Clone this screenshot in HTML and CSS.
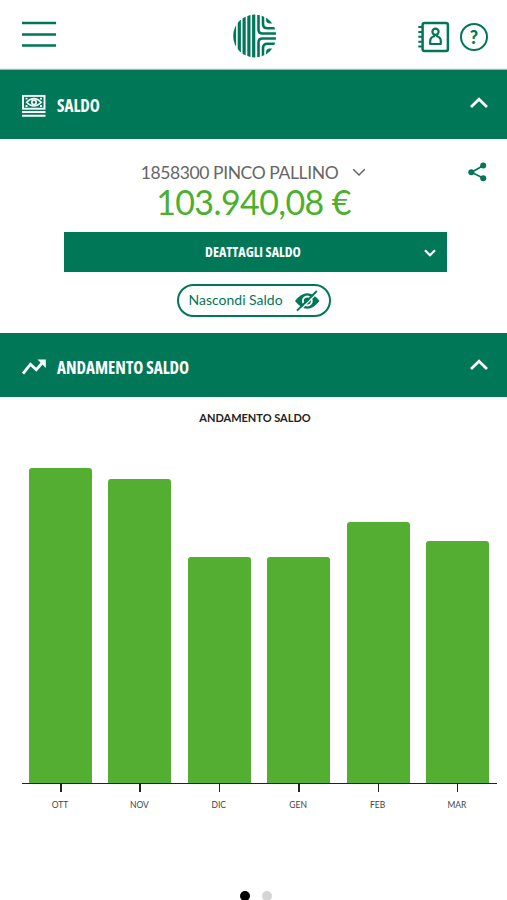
FILE: index.html
```html
<!DOCTYPE html>
<html lang="it">
<head>
<meta charset="utf-8">
<meta name="viewport" content="width=device-width, initial-scale=1">
<title>Saldo</title>
<link rel="stylesheet" href="styles.css">
</head>
<body>
<header class="topbar">
  <svg class="menu" width="34" height="28" viewBox="0 0 34 28"><path d="M0 2h34M0 13.500h34M0 24.500h34" stroke="#007858" stroke-width="2.500"/></svg>
  <svg class="logo" width="44" height="44" viewBox="0 0 44 44">
    <defs><clipPath id="disc"><circle cx="21.700" cy="22" r="21.500"/></clipPath></defs>
    <g clip-path="url(#disc)" fill="none" stroke="#007858" stroke-width="3.200">
      <path d="M1.500 0v44M6.300 0v44M11.100 0v44M15.900 0v44M20.700 0v44"/>
      <path stroke-width="2.600" d="M25.500 0v15.500q0 4 4 4H44M30 0v10q0 4.300 4.500 4.300H44M25.500 44V28.500q0-4 4-4H44M30 44V34q0-4.300 4.500-4.300H44"/>
      <path fill="#007858" stroke="none" d="M33 2v3.500q0 4 4 4h5L38 2zM33 42v-3.500q0-4 4-4h5L38 42z"/>
    </g>
  </svg>
  <div class="tools">
    <svg width="32" height="32" viewBox="0 0 32 32" fill="none" stroke="#007858">
      <rect x="4.600" y="1.900" width="25.300" height="28.200" rx="2" stroke-width="2.500"/>
      <path d="M.3 6h4.500M.3 11h4.500M.3 15.800h4.500M.3 20.700h4.500M.3 25.500h4.500" stroke-width="2"/>
      <circle cx="17.500" cy="10.800" r="3.100" stroke-width="2.200"/>
      <path d="M16 13.700v1.500c-2.500.8-3.800 2.500-3.800 4.800v3h10.600v-3c0-2.300-1.300-4-3.800-4.800v-1.500" stroke-width="2.200" stroke-linejoin="round"/>
    </svg>
    <span class="help">?</span>
  </div>
</header>
<section>
  <h2 class="band band-first">
    <svg width="24" height="24" viewBox="0 0 24 24" fill="none" stroke="#fff">
      <rect x="1" y="1.900" width="21.500" height="12.800" stroke-width="1.900"/>
      <path d="M4.500 8.300Q12 .8 19.300 8.300Q12 15.800 4.500 8.300z" stroke-width="1.500"/>
      <circle cx="12" cy="8.300" r="2.200" stroke-width="1.600"/>
      <path d="M3.500 4.700h2M18 4.700h2M3.500 12h2M18 12h2" stroke-width="1.800"/>
      <path d="M0 18.100h23.500M0 21.700h23.500" stroke-width="2"/>
    </svg>
    <span class="condensed">SALDO</span>
    <svg class="chevron" width="20" height="12" viewBox="0 0 20 12"><path d="M2 10l8-7.700L18 10" fill="none" stroke="#fff" stroke-width="2.800"/></svg>
  </h2>
  <div class="balance">
    <div class="account"><span>1858300 PINCO PALLINO</span>
      <svg width="14" height="9" viewBox="0 0 14 9"><path d="M1.200 1.200L7 7l5.800-5.800" fill="none" stroke="#666" stroke-width="1.500"/></svg>
    </div>
    <svg class="share" width="19" height="20" viewBox="0 0 19 20" fill="#007858"><path d="M15.500 3.500L3.500 10.300l12 6" fill="none" stroke="#007858" stroke-width="1.700"/><circle cx="15.200" cy="3.500" r="3"/><circle cx="3.300" cy="10.300" r="3"/><circle cx="15.200" cy="16.300" r="3"/></svg>
    <div class="amount">103.940,08 €</div>
    <button class="details"><span class="condensed">DEATTAGLI SALDO</span>
      <svg class="details-arrow" width="12" height="9" viewBox="0 0 12 9"><path d="M1 1.300l5 5 5-5" fill="none" stroke="#fff" stroke-width="2.200"/></svg>
    </button>
    <button class="hide"><span>Nascondi Saldo</span>
      <svg width="25" height="22" viewBox="0 0 25 22"><path d="M0 11Q6 3.300 12.300 3.300T24.500 11Q18.500 18.700 12.300 18.700T0 11z" fill="#007858"/><circle cx="12.300" cy="11" r="4.500" fill="none" stroke="#fff" stroke-width="1.900"/><path d="M3.500 21.700L23.300 1.800" stroke="#fff" stroke-width="1.500"/><path d="M2 20.700L21.800 1" stroke="#007858" stroke-width="1.900"/></svg>
    </button>
  </div>
</section>
<section>
  <h2 class="band">
    <svg width="24" height="24" viewBox="0 0 24 24"><path d="M1 18.500l7.500-9.300 5.800 5.500L20 8.200" fill="none" stroke="#fff" stroke-width="2.800"/><path d="M15.500 4.500h8.300V13z" fill="#fff"/></svg>
    <span class="condensed">ANDAMENTO SALDO</span>
    <svg class="chevron" width="20" height="12" viewBox="0 0 20 12"><path d="M2 10l8-7.700L18 10" fill="none" stroke="#fff" stroke-width="2.800"/></svg>
  </h2>
  <div class="chart">
    <h3>ANDAMENTO SALDO</h3>
    <div class="bars">
      <div class="bar" style="height:315px"></div>
      <div class="bar" style="height:304px"></div>
      <div class="bar" style="height:226.500px"></div>
      <div class="bar" style="height:226.500px"></div>
      <div class="bar" style="height:261.500px"></div>
      <div class="bar" style="height:242px"></div>
    </div>
    <div class="labels"><span>OTT</span><span>NOV</span><span>DIC</span><span>GEN</span><span>FEB</span><span>MAR</span></div>
    <div class="dots"><i class="dot active"></i><i class="dot"></i></div>
  </div>
</section>
</body>
</html>
```

FILE: styles.css
```css
* { box-sizing: border-box; }
html, body { height: 900px; overflow: hidden; }
body { margin: 0; background: #fff; font-family: Lato, sans-serif; }
svg { display: block; flex: none; }
h2, h3 { margin: 0; }
button { border: 0; padding: 0; font: inherit; }

.topbar { height: 70px; padding: 0 19px 0 22px; display: grid; grid-template-columns: 211px 1fr auto; }
.menu { margin-top: 21px; }
.logo { margin-top: 14px; }
.tools { display: flex; gap: 10px; margin-top: 21px; }
.help { width: 28px; height: 28px; margin-top: 2px; border: 2px solid #007858; border-radius: 50%; color: #007858; font-size: 18px; font-weight: 900; line-height: 24px; text-align: center; }

.condensed { font-family: "Open Sans", sans-serif; font-stretch: 75%; font-weight: 700; white-space: nowrap; }
.band { display: flex; align-items: center; height: 64px; padding: 4px 18px 0 22px; background: #007858; color: #fff; font-size: 17px; }
.band-first { height: 69px; padding-top: 2px; box-shadow: 0 -1px 1px #9bb8ae; }
.band .condensed { margin-left: 11px; }
.chevron { margin: 0 0 5px auto; }

.balance { position: relative; height: 194px; padding-top: 22px; display: flex; flex-direction: column; align-items: center; }
.account { display: flex; align-items: center; gap: 14px; height: 22px; color: #666; font-size: 17.500px; letter-spacing: -.4px; white-space: nowrap; }
.share { position: absolute; right: 20px; top: 23px; }
.amount { height: 40px; line-height: 38px; color: #4caf2f; font-size: 34px; letter-spacing: -.6px; white-space: nowrap; }
.details { position: relative; width: 383px; height: 40px; margin-top: 9px; margin-right: -4px; padding: 0 5px 2px 0; background: #007858; color: #fff; font-size: 14px; }
.details-arrow { position: absolute; right: 11px; top: 17px; }
.hide { display: flex; align-items: center; justify-content: space-between; width: 154px; height: 33px; margin-top: 12px; padding: 0 9px 0 10px; border: 2px solid #007858; border-radius: 17px; background: #fff; color: #007858; font-size: 14px; white-space: nowrap; }
.hide span { margin-top: -2px; }

.chart { height: 503px; padding-top: 11px; }
.chart h3 { height: 20px; padding-left: 3px; line-height: 20px; text-align: center; color: #222; font-size: 11px; font-weight: 700; }
.bars { display: flex; align-items: flex-end; justify-content: space-between; height: 356px; margin: 0 10px 0 22px; padding: 0 8px 0 7px; border-bottom: 1.500px solid #222; }
.bar { width: 63px; background: #54ae32; border-radius: 3px 3px 0 0; }
.labels { display: flex; justify-content: space-between; padding: 0 18px 0 29px; color: #444; font-size: 8.500px; }
.labels span { position: relative; width: 63px; height: 30px; padding: 15px 1px 0 0; line-height: 12px; text-align: center; }
.labels span::before { content: ""; position: absolute; left: 31px; top: 0; width: 1.500px; height: 8px; background: #222; }
.dots { display: flex; justify-content: center; gap: 12px; margin-top: 77px; padding-left: 5px; }
.dot { width: 10px; height: 10px; border-radius: 50%; background: #d5d5d5; }
.dot.active { background: #000; }
```
